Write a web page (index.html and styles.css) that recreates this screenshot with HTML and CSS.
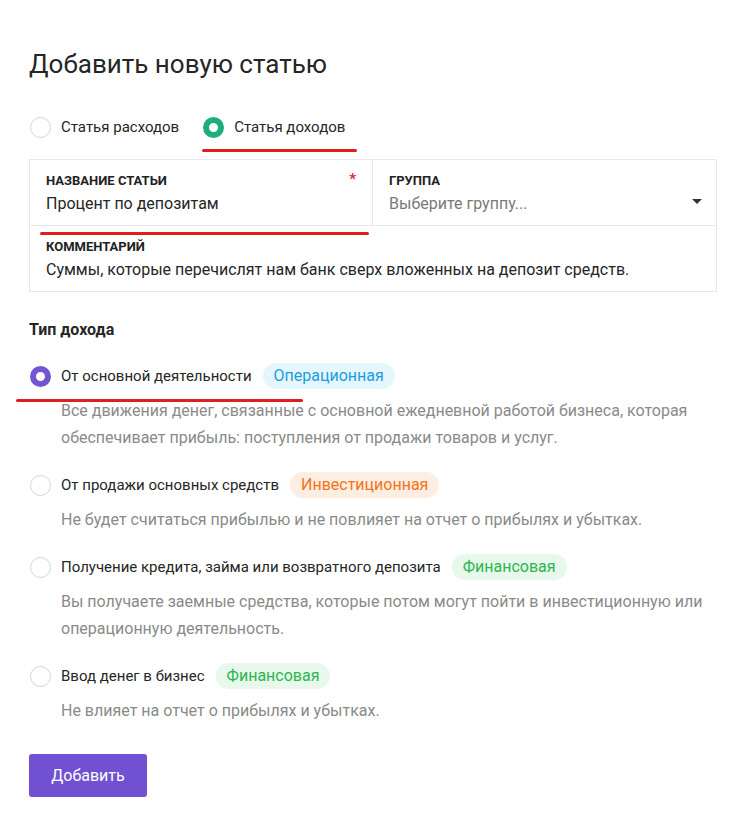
FILE: index.html
```html
<!DOCTYPE html>
<html lang="ru">
<head>
<meta charset="UTF-8">
<title>Добавить новую статью</title>
<link rel="stylesheet" href="styles.css">
</head>
<body>
  <div class="page">
    <h1 class="title">Добавить новую статью</h1>

    <div class="kind">
      <label class="radio">
        <span class="dot"></span>
        <span class="radio-text">Статья расходов</span>
      </label>
      <label class="radio marked">
        <span class="dot dot-green"></span>
        <span class="radio-text">Статья доходов</span>
      </label>
    </div>

    <div class="fields">
      <div class="field-row">
        <div class="field field-name marked">
          <div class="field-label">Название статьи <span class="req">*</span></div>
          <div class="field-value">Процент по депозитам</div>
        </div>
        <div class="field field-group">
          <div class="field-label">Группа</div>
          <div class="field-value placeholder">Выберите группу...</div>
          <span class="caret"></span>
        </div>
      </div>
      <div class="field">
        <div class="field-label">Комментарий</div>
        <div class="field-value">Суммы, которые перечислят нам банк сверх вложенных на депозит средств.</div>
      </div>
    </div>

    <h2 class="section">Тип дохода</h2>

    <div class="options">
      <div class="option">
        <div class="option-head marked-wide">
          <span class="dot dot-purple"></span>
          <span class="option-name">От основной деятельности</span>
          <span class="badge badge-blue">Операционная</span>
        </div>
        <p class="option-desc">Все движения денег, связанные с основной ежедневной работой бизнеса, которая обеспечивает прибыль: поступления от продажи товаров и услуг.</p>
      </div>
      <div class="option">
        <div class="option-head">
          <span class="dot"></span>
          <span class="option-name">От продажи основных средств</span>
          <span class="badge badge-orange">Инвестиционная</span>
        </div>
        <p class="option-desc">Не будет считаться прибылью и не повлияет на отчет о прибылях и убытках.</p>
      </div>
      <div class="option">
        <div class="option-head">
          <span class="dot"></span>
          <span class="option-name">Получение кредита, займа или возвратного депозита</span>
          <span class="badge badge-green">Финансовая</span>
        </div>
        <p class="option-desc">Вы получаете заемные средства, которые потом могут пойти в инвестиционную или операционную деятельность.</p>
      </div>
      <div class="option">
        <div class="option-head">
          <span class="dot"></span>
          <span class="option-name">Ввод денег в бизнес</span>
          <span class="badge badge-green">Финансовая</span>
        </div>
        <p class="option-desc">Не влияет на отчет о прибылях и убытках.</p>
      </div>
    </div>

    <button class="submit">Добавить</button>
  </div>
</body>
</html>
```

FILE: styles.css
```css
body {
  margin: 0;
  background: #ffffff;
  color: #262626;
  font-family: Roboto, "Noto Sans", sans-serif;
}
.page {
  width: 688px;
  padding: 38px 29px 30px;
}
.title {
  margin: 0;
  font-size: 26px;
  font-weight: 400;
  line-height: 52px;
}
.kind {
  display: flex;
  gap: 24px;
  margin: 17px 0 0;
  padding-left: 1px;
}
.radio {
  position: relative;
  display: flex;
  align-items: center;
  gap: 10px;
  height: 40px;
  font-size: 15px;
}
.dot {
  box-sizing: border-box;
  width: 21px;
  height: 21px;
  flex: none;
  border: 1px solid #d4d4d4;
  border-radius: 50%;
  background: #fff;
}
.dot-green {
  border: 6px solid #1fae7b;
}
.dot-purple {
  border: 6px solid #7155d3;
}

/* red marker lines */
.marked::after,
.marked-wide::after {
  content: "";
  position: absolute;
  height: 3px;
  border-radius: 2px;
  background: #e21d1d;
}
.radio.marked::after {
  left: -1px;
  right: -12px;
  bottom: -5px;
}

.fields {
  margin-top: 12px;
  border: 1px solid #e8e8e8;
}
.field-row {
  display: flex;
  border-bottom: 1px solid #e8e8e8;
}
.field {
  position: relative;
  padding: 12px 16px 10px;
}
.field-name {
  width: 310px;
  border-right: 1px solid #e8e8e8;
}
.field-name.marked::after {
  left: 10px;
  right: 3px;
  bottom: -10px;
}
.field-group {
  flex: 1;
}
.field-label {
  font-size: 13px;
  font-weight: 700;
  text-transform: uppercase;
  line-height: 18px;
  color: #222;
}
.req {
  position: absolute;
  right: 16px;
  top: 10px;
  color: #e02a2a;
  font-size: 15px;
}
.field-value {
  margin-top: 3px;
  font-size: 16px;
  line-height: 22px;
}
.placeholder {
  color: #7a7a7a;
}
.caret {
  position: absolute;
  right: 14px;
  top: 39px;
  border-left: 5px solid transparent;
  border-right: 5px solid transparent;
  border-top: 5px solid #333;
}

.section {
  margin: 27px 0 22px;
  font-size: 16px;
  font-weight: 700;
  line-height: 22px;
}
.option {
  margin-bottom: 21px;
}
.option-head {
  position: relative;
  display: flex;
  align-items: center;
  gap: 10px;
  height: 26px;
  padding-left: 1px;
  font-size: 15px;
}
.marked-wide::after {
  left: -13px;
  width: 287px;
  bottom: -13px;
}
.option-name {
  margin-right: 1px;
}
.badge {
  padding: 0 11px;
  border-radius: 13px;
  font-size: 16px;
  line-height: 26px;
}
.badge-blue {
  background: #e6f6fd;
  color: #1a9ee2;
}
.badge-orange {
  background: #fdeee4;
  color: #f57315;
}
.badge-green {
  background: #e8f8ec;
  color: #2cb64f;
}
.option-desc {
  margin: 8px 0 0 32px;
  font-size: 16px;
  line-height: 27px;
  color: #8a8a8a;
}
.submit {
  margin-top: 9px;
  width: 118px;
  height: 43px;
  border: none;
  border-radius: 3px;
  background: #7151d1;
  color: #fff;
  font-family: inherit;
  font-size: 16px;
}
```
